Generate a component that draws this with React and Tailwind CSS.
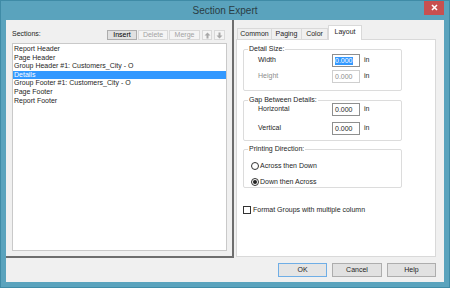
export default function App() {
  const items = [
    "Report Header",
    "Page Header",
    "Group Header #1: Customers_City - O",
    "Details",
    "Group Footer #1: Customers_City - O",
    "Page Footer",
    "Report Footer",
  ];
  const ArrowIcon = ({ down }) => (
    <svg width="7" height="7" viewBox="0 0 7 7" className={down ? "rotate-180" : ""}>
      <path d="M3.5 0.5 L6.5 3.5 L4.5 3.5 L4.5 6.5 L2.5 6.5 L2.5 3.5 L0.5 3.5 Z" fill="#a8a8a8" />
    </svg>
  );
  const Input = ({ value, selected, disabled }) => (
    <div
      className={
        "w-[28px] h-[13px] bg-white border flex items-center pl-[2px] " +
        (disabled ? "border-[#cfcfcf] text-[#8d8d8d]" : "border-[#8e8f8f]")
      }
    >
      {selected ? (
        <span className="bg-[#3399ff] text-white leading-[8px]">{value}</span>
      ) : (
        <span className="leading-[8px]">{value}</span>
      )}
    </div>
  );
  const Row = ({ label, disabled, selected }) => (
    <div className="flex items-center h-[13px]">
      <span className={"w-[74px] " + (disabled ? "text-[#8d8d8d]" : "")}>{label}</span>
      <Input value="0.000" selected={selected} disabled={disabled} />
      <span className="ml-[4px]">in</span>
    </div>
  );
  const GroupLabel = ({ children }) => (
    <span className="absolute left-[4px] top-[-5px] bg-white px-[1px] leading-[8px] text-[#1e1e1e]">{children}</span>
  );
  const Radio = ({ checked, label }) => (
    <div className="flex items-center h-[10px]">
      <div className="w-[8px] h-[8px] rounded-full border border-[#333] bg-white flex items-center justify-center">
        {checked && <div className="w-[4px] h-[4px] rounded-full bg-[#222]" />}
      </div>
      <span className="ml-[1px]">{label}</span>
    </div>
  );

  return (
    <div className="w-[450px] h-[288px] bg-[#5aa3bd] border border-[#3f8ba6] flex flex-col font-['Liberation_Sans',Arial,sans-serif] text-[7px] text-black overflow-hidden">
      <div className="h-[19px] shrink-0 relative flex items-center justify-center">
        <span className="text-[10px] text-[#2a3d44]">Section Expert</span>
        <div className="absolute right-[5px] top-[-1px] w-[20px] h-[15px] bg-[#c75050] flex items-center justify-center">
          <svg width="7" height="7" viewBox="0 0 7 7">
            <path d="M1 1 L6 6 M6 1 L1 6" stroke="#fff" strokeWidth="1.6" />
          </svg>
        </div>
      </div>
      <div className="mx-[5px] mb-[5px] flex-1 bg-[#f0f0f0] flex flex-col">
        <div className="h-[238px] flex">
          {/* left pane */}
          <div className="w-[228px] h-[238px] border-r-2 border-b-2 border-[#6e6e6e] pl-[6px] pt-[10px] flex flex-col">
            <div className="w-[213px] h-[10px] flex items-start">
              <span className="leading-[7px] mt-[0px] text-[#1e1e1e]">Sections:</span>
              <div className="ml-auto flex items-stretch h-[10px]">
                <div className="w-[30px] border border-[#adadad] bg-[#e1e1e1] flex items-center justify-center">Insert</div>
                <div className="w-[30px] ml-[1px] border border-[#d9d9d9] bg-[#f4f4f4] text-[#a3a3a3] flex items-center justify-center">Delete</div>
                <div className="w-[31px] ml-[1px] border border-[#d9d9d9] bg-[#f4f4f4] text-[#a3a3a3] flex items-center justify-center">Merge</div>
                <div className="w-[10px] ml-[2px] border border-[#d9d9d9] bg-[#f4f4f4] flex items-center justify-center"><ArrowIcon /></div>
                <div className="w-[11px] ml-[2px] border border-[#d9d9d9] bg-[#f4f4f4] flex items-center justify-center"><ArrowIcon down /></div>
              </div>
            </div>
            <div className="mt-[3px] w-[215px] h-[208px] bg-white border border-[#c9c9c9] pt-[1px]">
              {items.map((t) => (
                <div
                  key={t}
                  className={
                    "h-[8.6px] leading-[8.6px] pl-[1px] whitespace-nowrap " +
                    (t === "Details" ? "bg-[#3399ff] text-white" : "text-[#1e1e1e]")
                  }
                >
                  {t}
                </div>
              ))}
            </div>
          </div>
          {/* right pane */}
          <div className="flex-1 pl-[2px] pt-[5px] flex flex-col">
            <div className="h-[14px] flex items-end pl-[1px] text-[#1e1e1e]">
              <div className="w-[35px] h-[11px] border border-b-0 border-[#d9d9d9] bg-[#f0f0f0] flex items-center justify-center">Common</div>
              <div className="w-[30px] h-[11px] border border-b-0 border-l-0 border-[#d9d9d9] bg-[#f0f0f0] flex items-center justify-center">Paging</div>
              <div className="w-[26px] h-[11px] border border-b-0 border-l-0 border-[#d9d9d9] bg-[#f0f0f0] flex items-center justify-center">Color</div>
              <div className="w-[34px] h-[15px] mb-[-1px] relative z-10 border border-b-0 border-[#d9d9d9] bg-white flex items-center justify-center pb-[2px]">Layout</div>
            </div>
            <div className="w-[200px] h-[218px] bg-white border border-[#d9d9d9] pl-[6px] pt-[9px] text-[#1e1e1e]">
              <div className="relative w-[159px] h-[42px] border border-[#dcdcdc] rounded-[2px] pl-[14px] pt-[4px] flex flex-col gap-[3px]">
                <GroupLabel>Detail Size:</GroupLabel>
                <Row label="Width" selected />
                <Row label="Height" disabled />
              </div>
              <div className="relative mt-[9px] w-[159px] h-[41px] border border-[#dcdcdc] rounded-[2px] pl-[14px] pt-[2px] flex flex-col gap-[6px]">
                <GroupLabel>Gap Between Details:</GroupLabel>
                <Row label="Horizontal" />
                <Row label="Vertical" />
              </div>
              <div className="relative mt-[8px] w-[159px] h-[39px] border border-[#dcdcdc] rounded-[2px] pl-[7px] pt-[11px] flex flex-col gap-[6px]">
                <GroupLabel>Printing Direction:</GroupLabel>
                <Radio label="Across then Down" />
                <Radio label="Down then Across" checked />
              </div>
              <div className="mt-[17px] flex items-center h-[10px]">
                <div className="w-[8px] h-[8px] border border-[#333] bg-white" />
                <span className="ml-[2px]">Format Groups with multiple column</span>
              </div>
            </div>
          </div>
        </div>
        <div className="flex justify-end pr-[8px] pt-[5px] gap-[5px] text-[#1e1e1e]">
          <div className="w-[49px] h-[14px] border border-[#6faee6] bg-[#e5e5e5] flex items-center justify-center">OK</div>
          <div className="w-[50px] h-[14px] border border-[#adadad] bg-[#e1e1e1] flex items-center justify-center">Cancel</div>
          <div className="w-[49px] h-[14px] border border-[#adadad] bg-[#e1e1e1] flex items-center justify-center">Help</div>
        </div>
      </div>
    </div>
  );
}
